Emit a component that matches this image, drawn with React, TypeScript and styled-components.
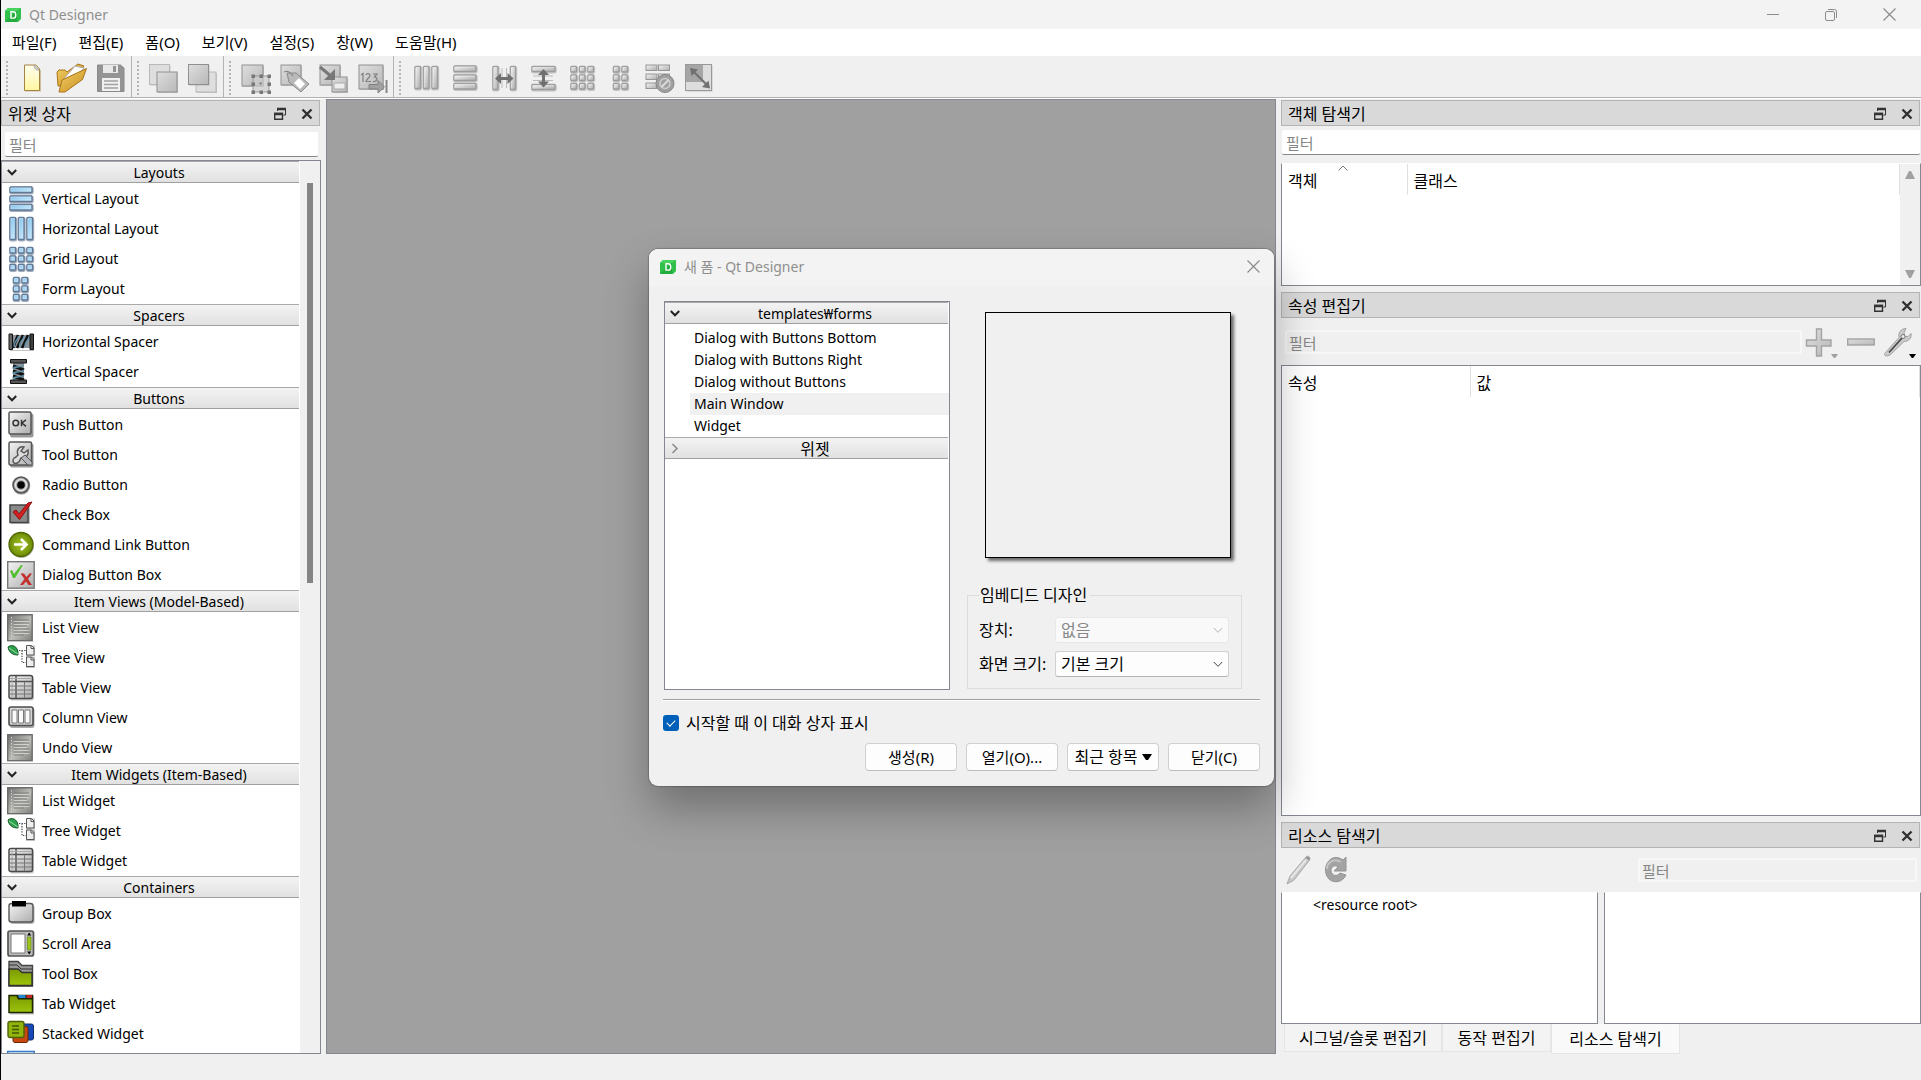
import React from "react";
import styled, { createGlobalStyle } from "styled-components";

const FONT = '"Noto Sans", "Noto Sans CJK KR", sans-serif';

const GlobalStyle = createGlobalStyle`
  *, *::before, *::after { box-sizing: border-box; }
  body { margin: 0; background: #f0f0f0; overflow: hidden; }
  body, button, input, select { font-family: ${FONT}; color: #000; }
  h1, h2, ul, p { margin: 0; padding: 0; font-weight: 400; }
  ul { list-style: none; }
  svg { display: block; flex: none; }
`;

/* ---------- window frame ---------- */

const Window = styled.div`
  height: 100vh;
  display: flex;
  flex-direction: column;
  border-left: 1px solid #000;
  background: #f0f0f0;
`;

const TitleBar = styled.header`
  height: 29px;
  flex: none;
  display: flex;
  align-items: center;
  padding: 0 3px 0 4px;
  background: #f3f3f3;
`;

const WindowTitle = styled.h1`
  flex: 1;
  padding-left: 8px;
  font-size: 14px;
  line-height: 20px;
  color: #8f8f8f;
`;

const CaptionButton = styled.button`
  width: 58px;
  height: 29px;
  padding: 0;
  border: 0;
  background: transparent;
  display: flex;
  align-items: center;
  justify-content: center;
`;

const MenuBar = styled.nav`
  height: 27px;
  flex: none;
  display: flex;
  background: #fff;
`;

const MenuButton = styled.button`
  padding: 0 11px;
  border: 0;
  background: transparent;
  font-size: 15px;
  line-height: 27px;
  white-space: nowrap;
`;

const ToolRow = styled.div`
  height: 43px;
  flex: none;
  display: flex;
  border-bottom: 1px solid #fff;
`;

const ToolBar = styled.div<{ $grow?: boolean }>`
  display: flex;
  align-items: center;
  flex: ${(p) => (p.$grow ? "1" : "none")};
  padding: 2px 1px 0 5px;
  border-bottom: 1px solid #b0b0b0;
  border-right: ${(p) => (p.$grow ? "0" : "1px solid #b4b4b4")};
`;

const Handle = styled.span`
  width: 3px;
  height: 34px;
  margin-right: 4px;
  background: repeating-linear-gradient(to bottom, #b4b4b4 0 2px, transparent 2px 4px);
  border-right: 1px solid #f0f0f0;
`;

const ToolButton = styled.button<{ $w?: number }>`
  position: relative;
  width: ${(p) => p.$w ?? 39}px;
  height: 36px;
  padding: 0;
  border: 0;
  background: transparent;
  display: flex;
  align-items: center;
  justify-content: center;
`;

const MenuMark = styled.span`
  position: absolute;
  right: 3px;
  bottom: 2px;
`;

const Body = styled.main`
  flex: 1;
  min-height: 0;
  display: flex;
`;

const StatusBar = styled.footer`
  height: 26px;
  flex: none;
`;

const Canvas = styled.section`
  flex: 1;
  background: #a0a0a0;
  border: 1px solid #828790;
`;

/* ---------- docks ---------- */

const LeftDock = styled.aside`
  width: 320px;
  margin: 1px 5px 0 0;
  display: flex;
  flex-direction: column;
`;

const RightColumn = styled.aside`
  width: 640px;
  margin: 1px 0 0 5px;
  display: flex;
  flex-direction: column;
  gap: 6px;
`;

const Dock = styled.section<{ $h?: number }>`
  display: flex;
  flex-direction: column;
  min-height: 0;
  flex: ${(p) => (p.$h ? `0 0 ${p.$h}px` : "1")};
`;

const DockTitle = styled.header`
  height: 26px;
  flex: none;
  margin-right: 1px;
  display: flex;
  align-items: center;
  gap: 13px;
  padding: 2px 5px 0 6px;
  background: #d9d9d9;
  border: 1px solid #b4b4b4;
`;

const DockName = styled.h2`
  flex: 1;
  font-size: 16px;
  line-height: 22px;
`;

const DockButton = styled.button`
  width: 14px;
  height: 14px;
  padding: 0;
  border: 0;
  background: transparent;
`;

const Filter = styled.input<{ $m: string }>`
  height: 25px;
  min-width: 0;
  flex: none;
  margin: ${(p) => p.$m};
  padding: 2px 4px 0;
  border: 0;
  border-bottom: 1px solid #868686;
  border-radius: 2px;
  outline: 0;
  font-size: 15px;
  background: #fff;
  &::placeholder { color: #868686; opacity: 1; }
`;

const FlatFilter = styled(Filter)<{ $w?: number }>`
  height: 24px;
  flex: ${(p) => (p.$w ? `0 0 ${p.$w}px` : "1")};
  padding: 1px 2px 0;
  border: 2px solid #f8f8f8;
  background: #f0f0f0;
`;

const Frame = styled.div`
  flex: 1;
  min-width: 0;
  min-height: 0;
  background: #fff;
  border: 1px solid #828790;
`;

const ScrollFrame = styled(Frame)`
  display: flex;
  overflow: hidden;
`;

const OpenFrame = styled(ScrollFrame)`
  align-items: stretch;
  border-top-color: #fff;
`;

const Groups = styled.div`
  flex: 1;
  height: 100%;
  overflow: hidden;
`;

const GroupHeader = styled.button`
  width: calc(100% - 1px);
  height: 22px;
  margin-bottom: 1px;
  padding: 0 0 0 5px;
  display: flex;
  align-items: center;
  border: 0;
  border-top: 1px solid #a9a9a9;
  border-bottom: 1px solid #a0a0a0;
  background: linear-gradient(#f3f3f3, #e1e1e1);
  font-size: 14px;
  line-height: 18px;
`;

const GroupName = styled.span<{ $size?: number }>`
  flex: 1;
  padding: 2px 0 0 2px;
  text-align: center;
  font-size: ${(p) => p.$size ?? 14}px;
`;

const WidgetItem = styled.li`
  height: 30px;
  padding-left: 5px;
  display: flex;
  align-items: center;
  gap: 7px;
  font-size: 14px;
  line-height: 20px;
  white-space: nowrap;
`;

const ScrollTrack = styled.div`
  width: 20px;
  padding: 22px 7px;
  background: #f0f0f0;
`;

const ScrollThumb = styled.div`
  height: 400px;
  background: #858585;
`;

const ArrowTrack = styled.div`
  width: 20px;
  padding: 7px 0;
  display: flex;
  flex-direction: column;
  align-items: center;
  justify-content: space-between;
  background: #f0f0f0;
`;

const TableArea = styled.div`
  flex: 1;
  min-width: 0;
`;

const Table = styled.table`
  width: 100%;
  border-collapse: collapse;
  table-layout: fixed;
`;

const Th = styled.th<{ $w?: number }>`
  position: relative;
  width: ${(p) => (p.$w ? `${p.$w}px` : "auto")};
  height: 31px;
  padding: 2px 6px 0;
  border-right: 1px solid #e0e0e0;
  text-align: left;
  font-size: 16px;
  font-weight: 400;
  line-height: 20px;
`;

const SortMark = styled.span`
  position: absolute;
  top: 1px;
  left: 60px;
  margin-left: -4px;
`;

const PropertyBar = styled.div`
  height: 47px;
  flex: none;
  display: flex;
  align-items: center;
  padding: 1px 2px 0 4px;
`;

const ResourceBar = styled.div`
  height: 44px;
  flex: none;
  display: flex;
  align-items: center;
  padding-left: 1px;
`;

const Spacer = styled.div`
  flex: 1;
`;

const Panes = styled.div`
  flex: 1;
  min-height: 0;
  display: flex;
  gap: 6px;
`;

const Pane = styled(Frame)`
  border-top-color: #fff;
`;

const TreeRow = styled.p`
  padding: 2px 0 0 31px;
  font-size: 14px;
  line-height: 20px;
`;

const Tabs = styled.div`
  height: 30px;
  flex: none;
  display: flex;
  align-items: flex-start;
  padding-left: 3px;
`;

const Tab = styled.button<{ $w: number; $active?: boolean }>`
  width: ${(p) => p.$w}px;
  height: ${(p) => (p.$active ? 30 : 28)}px;
  padding: 0;
  border: 1px solid #e5e5e5;
  border-top: 0;
  background: ${(p) => (p.$active ? "#f9f9f9" : "#f3f3f3")};
  font-size: 16px;
  line-height: 26px;
  white-space: nowrap;
`;

/* ---------- dialog ---------- */

const Dialog = styled.section`
  position: absolute;
  left: 649px;
  top: 249px;
  width: 625px;
  height: 537px;
  display: flex;
  flex-direction: column;
  border-radius: 9px;
  overflow: hidden;
  background: #f0f0f0;
  box-shadow: 0 0 1px 1px rgba(0, 0, 0, 0.2), 0 22px 44px rgba(0, 0, 0, 0.3);
`;

const DialogTitle = styled.header`
  height: 37px;
  flex: none;
  display: flex;
  align-items: center;
  padding: 0 12px 2px 11px;
  background: #f3f3f3;
`;

const DialogClose = styled.button`
  width: 18px;
  height: 18px;
  padding: 0;
  border: 0;
  background: transparent;
  display: flex;
  align-items: center;
  justify-content: center;
`;

const DialogMain = styled.div`
  height: 414px;
  flex: none;
  margin: 0 14px;
  padding: 15px 0 9px 1px;
  display: flex;
  gap: 17px;
  border-bottom: 1px solid #a0a0a0;
`;

const TemplateTree = styled.div`
  width: 286px;
  background: #fff;
  border: 1px solid #828790;
`;

const TemplateList = styled.ul`
  padding-top: 2px;
`;

const Template = styled.li<{ $selected?: boolean }>`
  height: 22px;
  margin-left: 25px;
  padding-left: 4px;
  background: ${(p) => (p.$selected ? "#f0f0f0" : "transparent")};
  font-size: 14px;
  line-height: 22px;
`;

const PreviewSide = styled.div`
  width: 275px;
  display: flex;
  flex-direction: column;
  justify-content: space-between;
`;

const Preview = styled.div`
  width: 246px;
  height: 246px;
  margin: 11px 0 0 18px;
  border: 1px solid #000;
  background: #f0f0f0;
  box-shadow: 3px 3px 3px rgba(0, 0, 0, 0.55);
`;

const GroupBox = styled.fieldset`
  margin: 0 0 1px;
  padding: 10px 12px 11px 11px;
  min-width: 0;
  border: 1px solid #dcdcdc;
  display: grid;
  grid-template-columns: 76px 1fr;
  row-gap: 8px;
  align-items: center;
`;

const Legend = styled.legend`
  padding: 0 3px 0 1px;
  font-size: 16px;
  line-height: 24px;
`;

const FieldLabel = styled.label`
  font-size: 16px;
  line-height: 24px;
  white-space: nowrap;
`;

const SelectWrap = styled.div`
  position: relative;
  height: 26px;
`;

const Select = styled.select`
  width: 100%;
  height: 26px;
  padding: 0 5px;
  appearance: none;
  border: 1px solid #d0d0d0;
  border-bottom-color: #b4b4b4;
  border-radius: 3px;
  background: #fdfdfd;
  font-size: 16px;
  &:disabled {
    color: #868686;
    opacity: 1;
    background: #f9f9f9;
    border-color: #e8e8e8;
  }
`;

const SelectMark = styled.span`
  position: absolute;
  right: 6px;
  top: 10px;
  pointer-events: none;
`;

const DialogFoot = styled.footer`
  flex: 1;
  margin: 0 14px;
  padding-top: 9px;
  border-top: 1px solid #fff;
  display: flex;
  flex-direction: column;
  gap: 7px;
`;

const CheckLabel = styled.label`
  height: 26px;
  display: flex;
  align-items: center;
  gap: 7px;
  font-size: 16px;
  line-height: 26px;
`;

const Check = styled.input`
  width: 16px;
  height: 16px;
  margin: 0;
  appearance: none;
  border-radius: 3px;
  background: #005fb8;
  display: grid;
  place-items: center;
  &:checked::after {
    content: "";
    width: 8px;
    height: 5px;
    border: solid #fff;
    border-width: 0 0 1px 1px;
    transform: rotate(-45deg) translate(1px, -1px);
  }
`;

const ButtonRow = styled.div`
  display: flex;
  justify-content: flex-end;
  gap: 9px;
`;

const PushButton = styled.button<{ $size?: number }>`
  width: 92px;
  height: 28px;
  padding: 0;
  display: flex;
  align-items: center;
  justify-content: center;
  gap: 4px;
  border: 1px solid #d0d0d0;
  border-bottom-color: #bcbcbc;
  border-radius: 4px;
  background: #fdfdfd;
  font-size: ${(p) => p.$size ?? 15}px;
  line-height: 24px;
  white-space: nowrap;
`;

/* ---------- drawings ---------- */

const Hidden = styled.svg`
  position: absolute;
`;

const Gradients = () => (
  <Hidden width="0" height="0" aria-hidden="true">
    <defs>
      <linearGradient id="gray" x1="0" y1="0" x2="1" y2="1"><stop offset="0" stopColor="#dedede" /><stop offset="1" stopColor="#b8b8b8" /></linearGradient>
      <linearGradient id="metal" x1="0" y1="0" x2="1" y2="1"><stop offset="0" stopColor="#f4f4f4" /><stop offset="1" stopColor="#adadad" /></linearGradient>
      <linearGradient id="darkMetal" x1="0" y1="0" x2="1" y2="1"><stop offset="0" stopColor="#6e6e6e" /><stop offset=".55" stopColor="#bdbdb8" /><stop offset="1" stopColor="#7c7c78" /></linearGradient>
      <linearGradient id="blue" x1="0" y1="0" x2="1" y2="1"><stop offset="0" stopColor="#7cbfee" /><stop offset="1" stopColor="#d3f0fd" /></linearGradient>
      <linearGradient id="lime" x1="0" y1="0" x2="0" y2="1"><stop offset="0" stopColor="#7c9a00" /><stop offset="1" stopColor="#9dc40c" /></linearGradient>
      <radialGradient id="orb"><stop offset="0" stopColor="#a6c627" /><stop offset="1" stopColor="#6d8b05" /></radialGradient>
      <linearGradient id="gold" x1="0" y1="0" x2="1" y2="1"><stop offset="0" stopColor="#f2cf6a" /><stop offset="1" stopColor="#c98f1c" /></linearGradient>
      <linearGradient id="page" x1="0" y1="0" x2="0" y2="1"><stop offset="0" stopColor="#fffef0" /><stop offset="1" stopColor="#fff6a0" /></linearGradient>
      <linearGradient id="spring" x1="0" y1="0" x2="1" y2="0"><stop offset="0" stopColor="#777" /><stop offset=".4" stopColor="#222" /><stop offset="1" stopColor="#444" /></linearGradient>
    </defs>
  </Hidden>
);

const Svg = ({ size = 28, children }: { size?: number; children: React.ReactNode }) => (
  <svg width={size} height={size} viewBox="0 0 28 28" fill="none" overflow="visible" aria-hidden="true">{children}</svg>
);

const Logo = () => (
  <svg width="16" height="14" viewBox="0 0 16 14" aria-hidden="true">
    <path d="M3 0h13v11l-3 3H0V3z" fill="#2fbf4a" />
    <path d="M3 0h13l-4 3H0z" fill="#46d35f" />
    <path d="M0 14L12 3v11z" fill="#1c9e37" opacity=".6" />
    <path d="M6 3.8h2.2c1.6 0 2.6 1.1 2.6 3.1s-1 3.2-2.6 3.2H6z" fill="none" stroke="#fff" strokeWidth="1.4" />
  </svg>
);

const Down = ({ color = "#222", thick = 2 }: { color?: string; thick?: number }) => (
  <svg width="10" height="7" viewBox="0 0 10 7" fill="none" aria-hidden="true"><path d="M.8 1L5 5.3 9.2 1" stroke={color} strokeWidth={thick} /></svg>
);
const Right = () => (
  <svg width="10" height="11" viewBox="0 0 10 11" fill="none" aria-hidden="true"><path d="M2.5 1L7 5.5 2.5 10" stroke="#888" strokeWidth="1.5" /></svg>
);
const Triangle = ({ up, color = "#000", w = 10, h = 6 }: { up?: boolean; color?: string; w?: number; h?: number }) => (
  <svg width={w} height={h} viewBox="0 0 10 6" preserveAspectRatio="none" aria-hidden="true"><path d={up ? "M0 6L4 0h2l4 6z" : "M0 0h10L6 6H4z"} fill={color} /></svg>
);
const Cross = () => (
  <svg width="13" height="13" viewBox="0 0 13 13" fill="none" aria-hidden="true"><path d="M.5.5l12 12M12.5.5l-12 12" stroke="#8c8c8c" strokeWidth="1.2" /></svg>
);
const FloatMark = () => (
  <svg width="14" height="14" viewBox="0 0 14 14" fill="none" aria-hidden="true">
    <path d="M4.5 4V2h8v6h-2" stroke="#333" /><path d="M4 2h9" stroke="#333" strokeWidth="2.5" />
    <path d="M1.7 6.5h7.8v5.8H1.7z" stroke="#333" strokeWidth="1.4" /><path d="M1 7h9" stroke="#333" strokeWidth="2.5" />
  </svg>
);
const CloseMark = () => (
  <svg width="14" height="14" viewBox="0 0 14 14" fill="none" aria-hidden="true"><path d="M2.5 2.5l9 9m0-9l-9 9" stroke="#303030" strokeWidth="2.4" /></svg>
);

type Box = [number, number, number, number];
const bars: Record<string, Box[]> = {
  v: [[3, 2, 22, 5.5], [3, 11, 22, 5.5], [3, 19.5, 22, 5.5]],
  h: [[3, 2.5, 5.5, 22], [11.5, 2.5, 5.5, 22], [20, 2.5, 5.5, 22]],
  grid: [2.5, 11, 19.5].flatMap((y) => [3, 11.5, 20].map((x): Box => [x, y, 5.5, 5.5])),
  form: [2.5, 11, 19.5].flatMap((y) => [6.5, 15].map((x): Box => [x, y, 5.5, 5.5])),
  hs: [[3, 2.5, 5, 23], [20.5, 2.5, 5, 23]],
  vs: [[3, 2.5, 23, 5], [3, 20.5, 23, 5]],
};
const Blocks = ({ kind, gray }: { kind: string; gray?: boolean }) => (
  <>
    {bars[kind].map(([x, y, w, h]) => (
      <g key={`${x}-${y}`}>
        <rect x={x + 0.4} y={y + 0.7} width={w} height={h} rx="1" stroke={gray ? "#b0b0b0" : "#7d8aa0"} strokeWidth="2.6" opacity=".7" />
        <rect x={x} y={y} width={w} height={h} rx=".8" fill={gray ? "url(#metal)" : "url(#blue)"} stroke={gray ? "#9c9c9c" : "#5f7896"} strokeWidth="1.3" />
        <path d={`M${x + 0.8} ${y + h - 1}V${y + 0.9}H${x + w - 1}`} stroke="#fff" strokeWidth=".7" opacity=".6" />
      </g>
    ))}
  </>
);
const Tile = ({ x, y, s = 21, light }: { x: number; y: number; s?: number; light?: boolean }) => (
  <>
    <rect x={x + 1} y={y + 1} width={s} height={s} fill="#999" opacity=".5" />
    <rect x={x} y={y} width={s} height={s} fill={light ? "#dedede" : "url(#gray)"} stroke={light ? "#b9b9b9" : "#8f8f8f"} />
  </>
);
const ListPage = () => (
  <>
    <rect x=".7" y=".7" width="24.5" height="26" fill="url(#darkMetal)" stroke="#666" strokeWidth="1.3" />
    <path d="M7 6h15M7 9h15M7 12h13M7 15h15M7 18h15M7 21h10" stroke="#777" strokeWidth=".9" />
    <path d="M7 7.500h15M7 10.500h15M7 13.500h13M7 16.500h15M7 19.500h15" stroke="#d4d4ce" strokeWidth=".9" />
    <path d="M4.500 3v22" stroke="#cfcfcf" strokeDasharray="1.500 1.500" />
  </>
);
const TreePages = () => (
  <>
    <path d="M1 3c4-3 9-1 10 5v3C6 11 2 9 1 3z" fill="#2da04b" stroke="#17582a" /><path d="M2 4l9 6" stroke="#9be0a9" />
    <path d="M12 6.5h7M15 6.5v12h4" stroke="#444" strokeDasharray="1.3 1.3" strokeWidth="1.2" />
    {[1.5, 13].map((y) => <g key={y}><path d={`M20.5 ${y + 1}h6.5v9h-7z`} stroke="#999" strokeWidth="2" opacity=".6" /><path d={`M19.5 ${y}h5l2.5 2.5v7h-7.5z`} fill="#eee" stroke="#555" /><path d={`M24 ${y}v3h3`} stroke="#555" /></g>)}
  </>
);
const TableGrid = () => (
  <>
    <rect x="3" y="2.5" width="24" height="24" rx="2" fill="#aaa" opacity=".6" />
    <rect x="2" y="1.5" width="23.5" height="23" rx="2" fill="url(#metal)" stroke="#4a4a4a" strokeWidth="1.5" />
    <path d="M3 7.500h22M9 2v22" stroke="#555" strokeWidth="1.500" /><path d="M3 4.500h22M5 2v22" stroke="#aaa" /><path d="M17.500 8v16M3 12h22M3 16h22M3 20h22" stroke="#777" />
  </>
);

const drawings: Record<string, React.ReactNode> = {
  vertical: <Blocks kind="v" />,
  horizontal: <Blocks kind="h" />,
  grid: <Blocks kind="grid" />,
  form: <Blocks kind="form" />,
  hspacer: <><rect x="2.500" y="7" width="24" height="13" fill="#8c959b" /><path d="M6 20l5-13M10 20l6-13M15 20l6-13" stroke="#111" strokeWidth="2.6" /><path d="M7.5 19c-2-5 4-7 4-11M13 19c-2-5 4-7 4-11M18.5 19c-2-5 4-7 4-11" stroke="#5e93ad" strokeWidth="1.4" /><path d="M2 6h3.5v15.500H2zM23 6h3.5v15.500H23z" fill="url(#spring)" stroke="#111" /><path d="M3 22.500h24" stroke="#999" opacity=".6" /></>,
  vspacer: <><path d="M6 5h11v18H6z" fill="#8c959b" /><path d="M6 8l11 4M6 13l11 4M6 18l11 4" stroke="#111" strokeWidth="3" /><path d="M17 7c-5 4-9 0-11 4M17 12c-5 4-9 0-11 4M17 17c-5 4-9 0-11 4" stroke="#5e93ad" strokeWidth="1.4" /><path d="M3.5 1.500h16v3.5h-16zM3.5 22h16v3.5h-16z" fill="#555" stroke="#111" /></>,
  push: <><rect x="3" y="2.5" width="23.5" height="24" rx="2" fill="#999" /><rect x="2" y="1" width="22" height="22" rx="1.5" fill="url(#metal)" stroke="#555" strokeWidth="1.5" /><circle cx="8.800" cy="12" r="2.8" stroke="#333" strokeWidth="1.5" /><path d="M14.500 8.8v6.5M19 8.8L15 12l4 3.3" stroke="#333" strokeWidth="1.5" /></>,
  tool: <><rect x="3" y="2.5" width="23.5" height="24" rx="2" fill="#999" /><rect x="2" y="1" width="22.5" height="23" rx="1.5" fill="url(#metal)" stroke="#555" strokeWidth="1.5" /><path d="M9 16c-3 1-4 4-2 6 2 1 5 0 6-3l1-2c5 1 8-3 7-8l-4 3-3-2 3-4c-5-1-8 3-6 8z" fill="#ddd" stroke="#555" strokeWidth="1.4" /><path d="M14 17l7 7h4v-3l-7-7z" fill="#b5b5bd" stroke="#555" /></>,
  radio: <><circle cx="14.5" cy="15" r="8.8" fill="#999" opacity=".7" /><circle cx="14" cy="14" r="8" fill="#a8a8a8" stroke="#555" strokeWidth="1.6" /><circle cx="14" cy="14" r="5.6" stroke="#e5e5e5" strokeWidth="1.4" /><circle cx="14" cy="14" r="3.8" fill="#050505" /></>,
  check: <><rect x="4" y="5" width="19" height="18" fill="#999" opacity=".6" /><rect x="3" y="4" width="18" height="17.5" fill="#8a8a8a" stroke="#444" strokeWidth="1.5" /><path d="M6 11l3-2 3 4 9-11 4-1-12.500 17.500z" fill="#d8201f" stroke="#8b0d10" /></>,
  command: <><circle cx="14.500" cy="14.500" r="12.500" fill="#777" opacity=".5" /><circle cx="14" cy="13.500" r="12" fill="url(#orb)" stroke="#516700" strokeWidth="1.300" /><path d="M7 13.500h12M14 8l5.500 5.500L14 19" stroke="#fff" strokeWidth="2.600" /></>,
  buttonbox: <><rect x=".7" y=".7" width="26.500" height="26.500" fill="url(#metal)" stroke="#777" strokeWidth="1.400" /><path d="M3 10l2-1 2 4 7-9h2L8 17H6z" fill="#55bf32" /><path d="M13.500 12.500h3.500l2.500 3.500 3-3.500H25l-4 5.500 4 6h-3.500l-2.500-3.500-3 3.500h-3l4.500-6z" fill="#c42f30" /></>,
  list: <ListPage />,
  tree: <TreePages />,
  table: <TableGrid />,
  column: <><rect x="3" y="4" width="24.500" height="20" rx="2" fill="#aaa" /><rect x="2" y="3" width="24" height="18.500" rx="2" fill="#d6d6d6" stroke="#4e4e4e" strokeWidth="1.600" /><path d="M5 6h5v13H5zM11.500 6h5v13h-5zM18 6h5v13h-5z" fill="#fafafa" stroke="#777" /></>,
  group: <><rect x="3" y="5" width="24.500" height="19" rx="3" fill="#999" opacity=".7" /><rect x="2" y="3.500" width="24" height="18.500" rx="2.500" fill="url(#metal)" stroke="#555" strokeWidth="1.400" /><path d="M5 1h14v5.500H5z" fill="#000" /></>,
  scroll: <><rect x="1" y="1" width="25.500" height="25" rx="2" fill="#bcbcbc" stroke="#555" strokeWidth="1.700" /><path d="M4 4h14v19H4z" fill="#fff" stroke="#777" /><path d="M20.500 7h3.500v13h-3.500z" fill="#9bc51d" stroke="#607c0b" strokeWidth=".6" /><path d="M22.200 2.500l2 3h-4zM22.200 24.500l2-3h-4z" fill="#000" /></>,
  toolbox: <><path d="M2 1.500h9l4 4h10.500V26H2z" fill="#999" stroke="#444" strokeWidth="1.400" /><path d="M2 5h8l4 4h11.500" stroke="#333" /><path d="M2 9h9l4 3.500h10V25.500H2z" fill="url(#lime)" stroke="#333" strokeWidth="1.400" /></>,
  tab: <><rect x="3" y="6" width="24" height="18.500" fill="#999" opacity=".6" /><path d="M2 5.500h23.500v17H2z" fill="url(#lime)" stroke="#1d2600" strokeWidth="1.500" /><path d="M9 5h17v4.500H11z" fill="#1d2600" /><path d="M11 5h7.500v3H12z" fill="#2687d3" /><path d="M19.500 5H25v3h-5.500z" fill="#c52626" /></>,
  stacked: <><rect x="12" y="4" width="14.500" height="16" rx="2" fill="#1649b5" stroke="#17306d" /><rect x="6" y="6.500" width="15" height="16" rx="2" fill="#c8480f" stroke="#69270a" /><rect x="1" y="1.500" width="16" height="16" rx="2" fill="#91b50d" stroke="#4d6206" strokeWidth="1.400" /><path d="M5 6h7M5 9.500h7M5 13h7" stroke="#435600" strokeWidth="1.300" /></>,
  frame: <rect x=".7" y="1.500" width="26.500" height="24" fill="#dcecfb" stroke="#3a78c8" strokeWidth="1.500" />,

  newForm: <><path d="M6 2h12l4 4.500V27.500H6z" fill="#a98a4f" opacity=".5" /><path d="M5.500 1h11.500l3.500 4v21.500H5.500z" fill="url(#page)" stroke="#a58340" /><path d="M15 1.500c0 3 2 5 5.500 4.500z" fill="#d6d6d6" stroke="#999" strokeWidth=".7" /></>,
  open: <><path d="M-1 8l2-2h6l2 2L20 0l6 2-15 20H0z" fill="url(#gold)" stroke="#a8741a" /><path d="M4 17L17 2l9 2-14 17z" fill="#fff" stroke="#aaa" /><path d="M1 28L4 16 28.500 4.500l-4 11L7 28z" fill="url(#gold)" stroke="#a8741a" /></>,
  save: <><path d="M.5 1h23L27 4v23.500H.5z" fill="#949494" stroke="#898989" /><path d="M6 1h15v8H6z" fill="#e8e8e8" /><path d="M16 2h3v6h-3z" fill="#949494" /><path d="M5 14h18v13H5z" fill="#f0f0f0" /><path d="M7 17h14M7 20.500h14M7 24h14" stroke="#a0a0a0" strokeWidth="1.300" /></>,
  front: <><Tile x={-0.5} y={0.500} s={20} light /><Tile x={7} y={8} s={20} /></>,
  back: <><Tile x={7} y={8} s={20} light /><Tile x={-0.500} y={0.500} s={20} /></>,
  editWidgets: <><Tile x={0} y={1} s={21} /><rect x="11" y="12" width="16" height="16" fill="#ccc" fillOpacity=".7" stroke="#9a9a9a" />{[10, 18, 26].flatMap((x) => [11, 19, 27].map((y) => <rect key={`${x}-${y}`} x={x - 0.500} y={y - 0.500} width={x === 18 && y === 19 ? 2 : 3.500} height={x === 18 && y === 19 ? 2 : 3.500} fill="#777" />))}</>,
  editSignals: <><Tile x={0} y={1} s={20} /><path d="M6 9h9l13 11-8 8L8 18z" fill="#b9b9b9" stroke="#8a8a8a" /><path d="M18 14l6 6-5 5-6-6z" fill="#fff" /><path d="M3 8c4-2 7 1 9 4" stroke="#777" /></>,
  editBuddies: <><Tile x={0} y={1} s={20} /><Tile x={12} y={13} s={15} /><path d="M14 19h11v6H14z" fill="#eee" stroke="#aaa" /><path d="M0 3l12 10" stroke="#777" strokeWidth="3" /><path d="M15 5v11H4z" fill="#777" /></>,
  tabOrder: <><Tile x={0} y={1} s={24} /><path d="M2 11l2-1.500V18M7 11c0-2 4-2 4 .5 0 2-4 4-4 6h5M14 10h4l-2.500 3c4 0 3 5-1.500 4.500" stroke="#808080" strokeWidth="1.200" /><path d="M10 20.500h9v-4l6.500 6.500-6.500 6v-4h-9z" fill="#a2a2a2" stroke="#808080" /><path d="M27.500 16v13" stroke="#888" strokeWidth="2" /></>,
  gHorizontal: <Blocks kind="h" gray />,
  gVertical: <Blocks kind="v" gray />,
  splitH: <><Blocks kind="hs" gray /><path d="M12 4v20M16.500 4v20" stroke="#bbb" /><path d="M5 14.500L11 9v4h6.500V9l6 5.500-6 5.500v-4H11v4z" fill="#707070" /></>,
  splitV: <><Blocks kind="vs" gray /><path d="M4 12h20M4 16.500h20" stroke="#bbb" /><path d="M14.500 5l5.500 6h-4v6.500h4l-5.500 6-5.500-6h4V11H9z" fill="#707070" /></>,
  gGrid: <Blocks kind="grid" gray />,
  gForm: <Blocks kind="form" gray />,
  breakLayout: <>{[0, 9, 18].map((y) => <g key={y}><rect x="0" y={y + 1} width="11" height="5.500" fill="url(#metal)" stroke="#959595" />{y < 18 && <rect x="12.500" y={y + 1} width="11" height="5.500" fill="url(#metal)" stroke="#959595" />}</g>)}<circle cx="19" cy="19.500" r="9" fill="#a0a0a0" stroke="#858585" /><circle cx="19" cy="19.500" r="5" stroke="#ccc" strokeWidth="1.600" /><path d="M15.500 23l7-7" stroke="#ddd" strokeWidth="1.800" /></>,
  adjust: <><rect x="1.500" y="1.500" width="26" height="26" fill="#aaa" opacity=".6" /><rect x=".5" y=".5" width="26" height="26" fill="#ddd" stroke="#999" /><rect x="1" y="1" width="17" height="17" fill="#a5a5a5" /><path d="M7 6l16 16" stroke="#707070" strokeWidth="2.200" /><path d="M5 4l8 1.500L6.500 12zM25 24.500L17 23l6.500-6.500z" fill="#707070" /></>,

  plus: <path d="M8.500 1h5v11h9.500v6h-9.500v10h-5V18h-10v-6h10z" fill="url(#gray)" stroke="#a3a3a3" strokeWidth="1.400" />,
  minus: <rect x=".7" y="11" width="26.500" height="6" fill="url(#gray)" stroke="#a3a3a3" strokeWidth="1.400" />,
  wrench: <><path d="M1 28c-3 0-3-2-1-4L13 9.500c-1-5 2-9 7-9l-2 4 1 4h3l3-3c1 5-3 8-7 8L4 27z" fill="#cacaca" stroke="#a2a2a2" /><path d="M3 24.500L16 10" stroke="#4a4a4a" strokeWidth="1.800" /><circle cx="17" cy="8.500" r="2" fill="#eee" stroke="#777" /></>,
  pencil: <><path d="M0 28l3-8L19 1c2-2 5 0 3.500 3L7 24z" fill="#c8c8c8" stroke="#a8a8a8" /><path d="M4 22L19 4" stroke="#e6e6e6" strokeWidth="2" /><path d="M18.500 1.500l4 3c1-3-1.500-5-4-3z" fill="#8d8d8d" /></>,
  reload: <><path d="M22 19c-3 7-12 9-17 4S0 8 7 3c5-3 9-1 12 1l3-3v14H10l4-4c-4-3-7 0-7 4 1 5 6 6 9 2z" fill="#a3a3a3" stroke="#949494" /><path d="M3 13C3 6 10 2 17 6" stroke="#c4c4c4" strokeWidth="2" /></>,
};

const Icon = ({ name, size }: { name: string; size?: number }) => <Svg size={size}>{drawings[name]}</Svg>;

/* ---------- data ---------- */

const menus = ["파일(F)", "편집(E)", "폼(O)", "보기(V)", "설정(S)", "창(W)", "도움말(H)"];

const toolbars: [string, string][][] = [
  [["newForm", "새 폼"], ["open", "열기"], ["save", "저장"]],
  [["front", "맨 앞으로"], ["back", "맨 뒤로"]],
  [["editWidgets", "위젯 편집"], ["editSignals", "시그널 편집"], ["editBuddies", "버디 편집"], ["tabOrder", "탭 순서 편집"]],
  [["gHorizontal", "수평 배치"], ["gVertical", "수직 배치"], ["splitH", "수평 분할"], ["splitV", "수직 분할"], ["gGrid", "격자 배치"], ["gForm", "폼 배치"], ["breakLayout", "배치 해제"], ["adjust", "크기 조정"]],
];

const groups: { name: string; items: [string, string][] }[] = [
  { name: "Layouts", items: [["vertical", "Vertical Layout"], ["horizontal", "Horizontal Layout"], ["grid", "Grid Layout"], ["form", "Form Layout"]] },
  { name: "Spacers", items: [["hspacer", "Horizontal Spacer"], ["vspacer", "Vertical Spacer"]] },
  { name: "Buttons", items: [["push", "Push Button"], ["tool", "Tool Button"], ["radio", "Radio Button"], ["check", "Check Box"], ["command", "Command Link Button"], ["buttonbox", "Dialog Button Box"]] },
  { name: "Item Views (Model-Based)", items: [["list", "List View"], ["tree", "Tree View"], ["table", "Table View"], ["column", "Column View"], ["list", "Undo View"]] },
  { name: "Item Widgets (Item-Based)", items: [["list", "List Widget"], ["tree", "Tree Widget"], ["table", "Table Widget"]] },
  { name: "Containers", items: [["group", "Group Box"], ["scroll", "Scroll Area"], ["toolbox", "Tool Box"], ["tab", "Tab Widget"], ["stacked", "Stacked Widget"], ["frame", ""]] },
];

const templates = ["Dialog with Buttons Bottom", "Dialog with Buttons Right", "Dialog without Buttons", "Main Window", "Widget"];

const DockHeader = ({ title }: { title: string }) => (
  <DockTitle>
    <DockName>{title}</DockName>
    <DockButton aria-label="분리"><FloatMark /></DockButton>
    <DockButton aria-label="닫기"><CloseMark /></DockButton>
  </DockTitle>
);

const NewFormDialog = () => (
  <Dialog role="dialog" aria-label="새 폼">
    <DialogTitle>
      <Logo />
      <WindowTitle as="h2">새 폼 - Qt Designer</WindowTitle>
      <DialogClose aria-label="닫기"><Cross /></DialogClose>
    </DialogTitle>
    <DialogMain>
      <TemplateTree>
        <GroupHeader><Down /><GroupName>templates₩forms</GroupName></GroupHeader>
        <TemplateList>
          {templates.map((t) => <Template key={t} $selected={t === "Main Window"}>{t}</Template>)}
        </TemplateList>
        <GroupHeader><Right /><GroupName $size={16}>위젯</GroupName></GroupHeader>
      </TemplateTree>
      <PreviewSide>
        <Preview />
        <GroupBox>
          <Legend>임베디드 디자인</Legend>
          <FieldLabel htmlFor="device">장치:</FieldLabel>
          <SelectWrap>
            <Select id="device" disabled><option>없음</option></Select>
            <SelectMark><Down color="#b4b4b4" thick={1} /></SelectMark>
          </SelectWrap>
          <FieldLabel htmlFor="screen">화면 크기:</FieldLabel>
          <SelectWrap>
            <Select id="screen"><option>기본 크기</option></Select>
            <SelectMark><Down color="#444" thick={1} /></SelectMark>
          </SelectWrap>
        </GroupBox>
      </PreviewSide>
    </DialogMain>
    <DialogFoot>
      <CheckLabel><Check type="checkbox" defaultChecked />시작할 때 이 대화 상자 표시</CheckLabel>
      <ButtonRow>
        <PushButton>생성(R)</PushButton>
        <PushButton>열기(O)...</PushButton>
        <PushButton $size={16}>최근 항목<Triangle /></PushButton>
        <PushButton>닫기(C)</PushButton>
      </ButtonRow>
    </DialogFoot>
  </Dialog>
);

export default function App() {
  return (
    <>
      <GlobalStyle />
      <Gradients />
      <Window>
        <TitleBar>
          <Logo />
          <WindowTitle>Qt Designer</WindowTitle>
          <CaptionButton aria-label="최소화"><svg width="12" height="12" aria-hidden="true"><path d="M0 5.500h12" stroke="#8c8c8c" /></svg></CaptionButton>
          <CaptionButton aria-label="이전 크기로"><svg width="12" height="12" viewBox="0 0 12 12" fill="none" stroke="#8c8c8c" aria-hidden="true"><rect x=".5" y="2.500" width="9" height="9" rx="1.500" /><path d="M3 .5h6.500a2 2 0 0 1 2 2V9" /></svg></CaptionButton>
          <CaptionButton aria-label="닫기"><Cross /></CaptionButton>
        </TitleBar>
        <MenuBar>{menus.map((m) => <MenuButton key={m}>{m}</MenuButton>)}</MenuBar>
        <ToolRow>
          {toolbars.map((bar, i) => (
            <ToolBar key={i} $grow={i === toolbars.length - 1}>
              <Handle />
              {bar.map(([icon, label]) => <ToolButton key={icon} aria-label={label}><Icon name={icon} /></ToolButton>)}
            </ToolBar>
          ))}
        </ToolRow>
        <Body>
          <LeftDock>
            <DockHeader title="위젯 상자" />
            <Filter $m="6px 3px 3px 4px" placeholder="필터" aria-label="위젯 필터" />
            <ScrollFrame>
              <Groups>
                {groups.map((g) => (
                  <section key={g.name}>
                    <GroupHeader><Down /><GroupName>{g.name}</GroupName></GroupHeader>
                    <ul>
                      {g.items.map(([icon, label]) => <WidgetItem key={label}><Icon name={icon} />{label}</WidgetItem>)}
                    </ul>
                  </section>
                ))}
              </Groups>
              <ScrollTrack><ScrollThumb /></ScrollTrack>
            </ScrollFrame>
          </LeftDock>
          <Canvas />
          <RightColumn>
            <Dock $h={186}>
              <DockHeader title="객체 탐색기" />
              <Filter $m="4px 1px 8px" placeholder="필터" aria-label="객체 필터" />
              <OpenFrame>
                <TableArea>
                  <Table>
                    <thead><tr><Th $w={125}>객체<SortMark><svg width="10" height="6" fill="none" aria-hidden="true"><path d="M.5 5.500L5 1l4.500 4.500" stroke="#777" /></svg></SortMark></Th><Th>클래스</Th></tr></thead>
                  </Table>
                </TableArea>
                <ArrowTrack><Triangle up color="#a0a0a0" w={10} h={8} /><Triangle color="#a0a0a0" w={10} h={8} /></ArrowTrack>
              </OpenFrame>
            </Dock>
            <Dock>
              <DockHeader title="속성 편집기" />
              <PropertyBar>
                <FlatFilter $m="0" placeholder="필터" aria-label="속성 필터" />
                <ToolButton aria-label="추가"><Icon name="plus" /><MenuMark><Triangle color="#a0a0a0" w={7} h={4} /></MenuMark></ToolButton>
                <ToolButton aria-label="제거"><Icon name="minus" /></ToolButton>
                <ToolButton aria-label="구성"><Icon name="wrench" /><MenuMark><Triangle w={7} h={4} /></MenuMark></ToolButton>
              </PropertyBar>
              <Frame>
                <Table>
                  <thead><tr><Th $w={188}>속성</Th><Th>값</Th></tr></thead>
                </Table>
              </Frame>
            </Dock>
            <Dock $h={232}>
              <DockHeader title="리소스 탐색기" />
              <ResourceBar>
                <ToolButton $w={37} aria-label="리소스 편집"><Icon name="pencil" /></ToolButton>
                <ToolButton $w={37} aria-label="다시 읽기"><Icon name="reload" /></ToolButton>
                <Spacer />
                <FlatFilter $w={279} $m="0 4px 0 0" placeholder="필터" aria-label="리소스 필터" />
              </ResourceBar>
              <Panes>
                <Pane><TreeRow>&lt;resource root&gt;</TreeRow></Pane>
                <Pane />
              </Panes>
              <Tabs role="tablist">
                <Tab role="tab" $w={158}>시그널/슬롯 편집기</Tab>
                <Tab role="tab" $w={109}>동작 편집기</Tab>
                <Tab role="tab" $w={129} $active aria-selected>리소스 탐색기</Tab>
              </Tabs>
            </Dock>
          </RightColumn>
        </Body>
        <StatusBar />
      </Window>
      <NewFormDialog />
    </>
  );
}
